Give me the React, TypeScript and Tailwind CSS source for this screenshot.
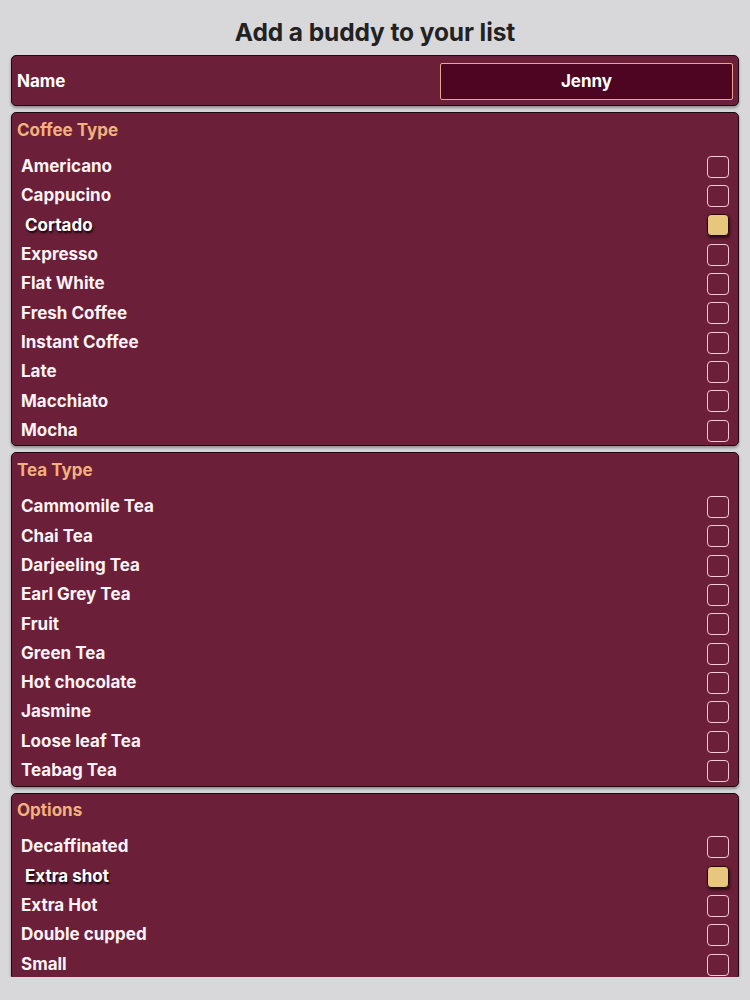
import React from 'react';

type Section = {
  title: string;
  items: { label: string; checked?: boolean }[];
};

const sections: Section[] = [
  {
    title: 'Coffee Type',
    items: [
      { label: 'Americano' },
      { label: 'Cappucino' },
      { label: 'Cortado', checked: true },
      { label: 'Expresso' },
      { label: 'Flat White' },
      { label: 'Fresh Coffee' },
      { label: 'Instant Coffee' },
      { label: 'Late' },
      { label: 'Macchiato' },
      { label: 'Mocha' },
    ],
  },
  {
    title: 'Tea Type',
    items: [
      { label: 'Cammomile Tea' },
      { label: 'Chai Tea' },
      { label: 'Darjeeling Tea' },
      { label: 'Earl Grey Tea' },
      { label: 'Fruit' },
      { label: 'Green Tea' },
      { label: 'Hot chocolate' },
      { label: 'Jasmine' },
      { label: 'Loose leaf Tea' },
      { label: 'Teabag Tea' },
    ],
  },
  {
    title: 'Options',
    items: [
      { label: 'Decaffinated' },
      { label: 'Extra shot', checked: true },
      { label: 'Extra Hot' },
      { label: 'Double cupped' },
      { label: 'Small' },
    ],
  },
];

const Checkbox: React.FC<{ checked?: boolean }> = ({ checked }) =>
  checked ? (
    <div className="w-[22px] h-[22px] rounded-[4px] bg-[#e6c77c] border-[1.5px] border-[#2a0610] shadow-[1px_2px_3px_rgba(0,0,0,0.6)]" />
  ) : (
    <div className="w-[22px] h-[22px] rounded-[4px] border-[1.5px] border-[#f5c9d6]" />
  );

const Row: React.FC<{ label: string; checked?: boolean }> = ({ label, checked }) => (
  <div className="h-[29.33px] flex items-center justify-between pl-[9px] pr-[9px]">
    <span
      className={
        checked
          ? 'pl-[4px] text-white [text-shadow:1px_2px_2px_rgba(0,0,0,0.85)]'
          : 'text-[#fbf3f5]'
      }
    >
      {label}
    </span>
    <Checkbox checked={checked} />
  </div>
);

const Panel: React.FC<{ section: Section }> = ({ section }) => (
  <div className="mt-[6px] rounded-[5px] border border-[#1d0a10] bg-[#6b1f38] shadow-[0_2px_3px_rgba(0,0,0,0.35)]">
    <div className="h-[34px] flex items-center px-[5px] pt-[1px] text-[#f2b27c]">{section.title}</div>
    <div className="mt-[4px] pt-[1px]">
      {section.items.map((it) => (
        <Row key={it.label} label={it.label} checked={it.checked} />
      ))}
    </div>
  </div>
);

export default function App() {
  return (
    <div className="w-[750px] h-[1000px] bg-[#d8d8da] font-['Inter','Liberation_Sans',sans-serif] font-bold text-[17px] overflow-hidden">
      <div className="h-[55px] flex items-center justify-center pt-[9px]">
        <h1 className="text-[24.5px] font-bold text-[#222222] tracking-[-0.1px]">Add a buddy to your list</h1>
      </div>
      <div className="h-[922px] overflow-hidden px-[11px]">
        <div className="h-[51px] rounded-[5px] border border-[#1d0a10] bg-[#6b1f38] shadow-[0_2px_3px_rgba(0,0,0,0.35)] flex items-start justify-between pl-[5px] pr-[5px] pt-[7px]">
          <span className="text-white mt-[6px]">Name</span>
          <div className="w-[293px] h-[37px] bg-[#4e0521] border-[1.5px] border-[#e8a58f] rounded-[2px] flex items-center justify-center pt-[1px] text-white">
            Jenny
          </div>
        </div>
        {sections.map((s) => (
          <Panel key={s.title} section={s} />
        ))}
      </div>
    </div>
  );
}
